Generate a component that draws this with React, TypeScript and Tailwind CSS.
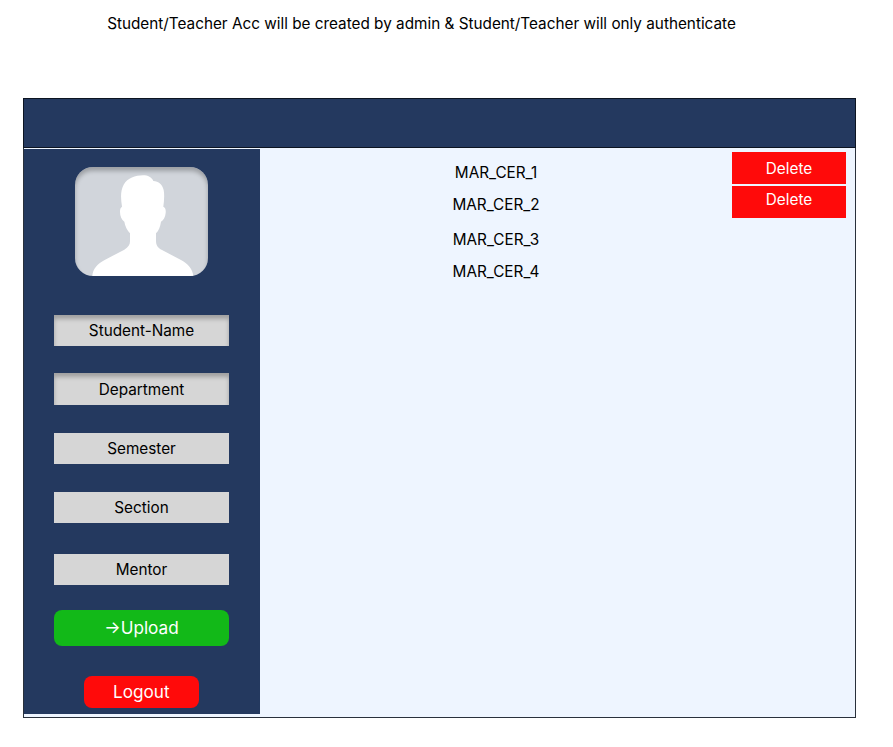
import React from "react";

const fields = [
  { label: "Student-Name", box: "mt-[38.5px] h-[31px] pt-[1px] shadow-[inset_0_4px_4px_rgba(0,0,0,0.25)]" },
  { label: "Department", box: "mt-[27.5px] h-[32px] pt-[2px] shadow-[inset_0_4px_4px_rgba(0,0,0,0.25)]" },
  { label: "Semester", box: "mt-[28px] h-[31px]" },
  { label: "Section", box: "mt-[28px] h-[31px]" },
  { label: "Mentor", box: "mt-[31px] h-[31px]" },
];

const certificates = [
  { name: "MAR_CER_1", row: "h-[32px]" },
  { name: "MAR_CER_2", row: "h-[32px]" },
  { name: "MAR_CER_3", row: "mt-[3px] h-[32px]" },
  { name: "MAR_CER_4", row: "h-[32px]" },
];

function Avatar() {
  return (
    <div className="relative ml-[51px] h-[109px] w-[133px] overflow-hidden rounded-[18px] bg-[#d1d5db]">
      <svg viewBox="45 36 399 327" className="block h-full w-full" preserveAspectRatio="none">
        <path
          fill="#fff"
          d="M97 363C98 342 113 326 134 315L193 284C205 277 210 269 210 259V235C202 226 195 214 193 200C185 194 180 184 180 171C180 163 181 158 186 155C182 128 181 107 191 89C203 69 226 61 249 61C264 61 275 67 280 78C296 79 307 88 311 105C314 122 312 138 310 155C316 157 318 164 317 174C316 186 311 195 303 200C301 215 296 227 288 235V257C288 270 293 278 306 285L363 315C385 327 398 343 400 363Z"
        />
      </svg>
      <div className="absolute inset-0 rounded-[18px] shadow-[inset_0_4px_4px_rgba(0,0,0,0.25)]" />
    </div>
  );
}

export default function App() {
  return (
    <main className="h-[747px] w-[893px] overflow-hidden bg-white font-['Inter',sans-serif] text-[15.31px] leading-[18px] font-normal text-black">
      <p className="flex h-[98px] w-[843px] justify-center pt-[15px] whitespace-nowrap">
        Student/Teacher Acc will be created by admin &amp; Student/Teacher will only authenticate
      </p>
      <section className="ml-[23px] flex h-[619.5px] w-[833px] flex-col border border-[#29303b] bg-[#eef5ff]">
        <header className="-mx-px -mt-px h-[50px] shrink-0 border border-[#0c1421] bg-[#24395f]" />
        <div className="flex min-h-0 flex-1">
          <aside className="mt-px h-[565px] w-[236px] shrink-0 bg-[#24395f] pt-[18px]">
            <Avatar />
            {fields.map((f) => (
              <div key={f.label} className={`ml-[30px] flex w-[175px] items-center justify-center bg-[#d6d6d6] ${f.box}`}>
                {f.label}
              </div>
            ))}
            <button className="mt-[25px] ml-[30px] flex h-[35.5px] w-[175px] items-center justify-center rounded-[8px] bg-[#12b918] text-[17.15px] text-white">
              →Upload
            </button>
            <button className="mt-[30px] ml-[60px] flex h-[32px] w-[114.5px] items-center justify-center rounded-[8px] bg-[#ff0a0a] text-[17.15px] text-white">
              Logout
            </button>
          </aside>
          <ul className="w-[472px] pt-[9px] text-center">
            {certificates.map((c) => (
              <li key={c.name} className={`flex items-center justify-center ${c.row}`}>
                {c.name}
              </li>
            ))}
          </ul>
          <div className="flex w-[114px] flex-col gap-[2.5px] pt-[3.5px] text-white">
            <button className="h-[32px] bg-[#ff0a0a] pt-[2px]">Delete</button>
            <button className="h-[32px] bg-[#ff0a0a] pb-[4px]">Delete</button>
          </div>
        </div>
      </section>
    </main>
  );
}
